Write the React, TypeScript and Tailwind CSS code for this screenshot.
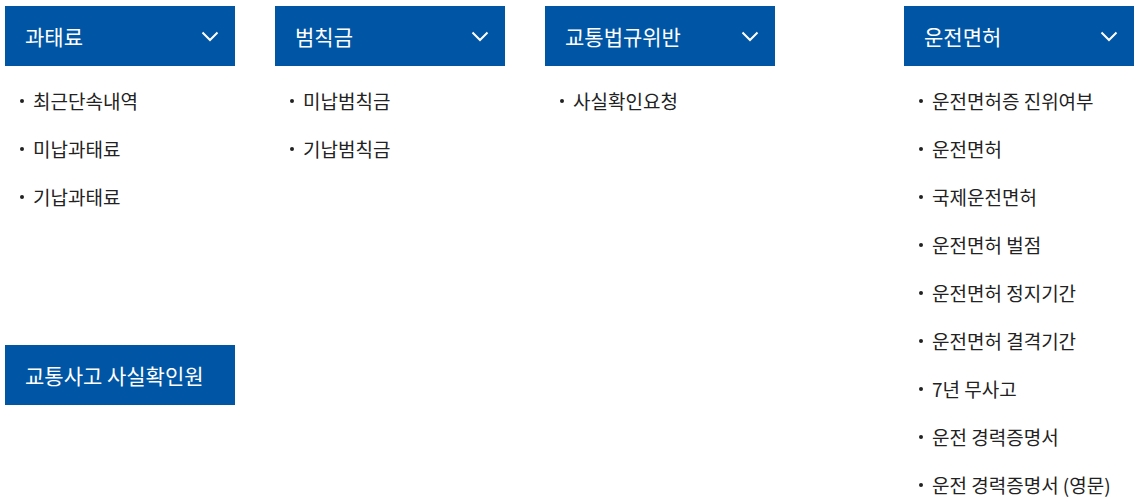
import React from "react";

const font = { fontFamily: '"Noto Sans CJK KR", "Noto Sans", sans-serif' };

function Chevron() {
  return (
    <svg width="18" height="12" viewBox="0 0 18 12" className="shrink-0">
      <path d="M1.5 2.5 L9 10 L16.5 2.5" fill="none" stroke="white" strokeWidth="2" />
    </svg>
  );
}

function Header({ title }: { title: string }) {
  return (
    <div className="flex h-[60px] w-[230px] items-center justify-between bg-[#0055a5] pl-5 pr-4 text-white">
      <span className="text-[21px] font-normal leading-none">{title}</span>
      <Chevron />
    </div>
  );
}

function List({ items }: { items: string[] }) {
  return (
    <ul className="pt-[11px]">
      {items.map((t) => (
        <li key={t} className="flex h-[48px] items-center text-[19px] text-[#222]">
          <span className="ml-[15px] mr-[9px] h-[4px] w-[4px] shrink-0 rounded-full bg-[#222]" />
          <span className="whitespace-nowrap">{t}</span>
        </li>
      ))}
    </ul>
  );
}

export default function App() {
  return (
    <div className="h-[504px] w-[1138px] overflow-hidden bg-white" style={font}>
      <div className="flex pl-[5px] pt-[6px]">
        <div className="w-[230px]">
          <Header title="과태료" />
          <List items={["최근단속내역", "미납과태료", "기납과태료"]} />
          <div className="mt-[124px] flex h-[60px] w-[230px] items-center bg-[#0055a5] pl-5 text-white">
            <span className="text-[21px] font-normal leading-none">교통사고 사실확인원</span>
          </div>
        </div>
        <div className="ml-[40px] w-[230px]">
          <Header title="범칙금" />
          <List items={["미납범칙금", "기납범칙금"]} />
        </div>
        <div className="ml-[40px] w-[230px]">
          <Header title="교통법규위반" />
          <List items={["사실확인요청"]} />
        </div>
        <div className="ml-[129px] w-[230px]">
          <Header title="운전면허" />
          <List
            items={[
              "운전면허증 진위여부",
              "운전면허",
              "국제운전면허",
              "운전면허 벌점",
              "운전면허 정지기간",
              "운전면허 결격기간",
              "7년 무사고",
              "운전 경력증명서",
              "운전 경력증명서 (영문)",
            ]}
          />
        </div>
      </div>
    </div>
  );
}
